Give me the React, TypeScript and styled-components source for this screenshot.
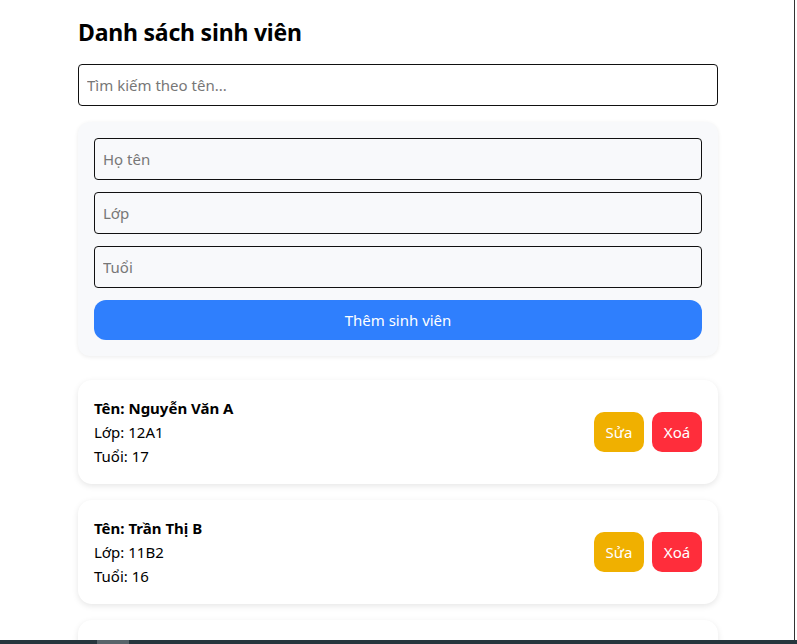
import React, { useState } from "react";
import styled, { createGlobalStyle } from "styled-components";

const GlobalStyle = createGlobalStyle`
  html, body { margin: 0; padding: 0; background: #fff; }
  body { font-family: "Noto Sans", "Open Sans", sans-serif; color: #000; }
  * { box-sizing: border-box; }
`;

const Page = styled.div`
  width: 795px;
  height: 644px;
  border-right: 1px solid #333;
  overflow: hidden;
  position: relative;
`;

const Container = styled.div`
  width: 640px;
  margin: 0 0 0 78px;
  padding-top: 16px;
  display: flex;
  flex-direction: column;
`;

const Title = styled.h1`
  margin: 0 0 16px;
  font-size: 23px;
  font-weight: 700;
  line-height: 32px;
  letter-spacing: -0.2px;
`;

const Input = styled.input`
  display: block;
  width: 100%;
  height: 42px;
  padding: 0 8px;
  font-family: inherit;
  font-size: 15px;
  border: 1px solid #111;
  border-radius: 4px;
  background: ${(p: { $tint?: boolean }) => (p.$tint ? "#f8f9fb" : "#fff")};
  color: #000;
  outline: none;
  &::placeholder { color: #777; }
`;

const FormCard = styled.div`
  margin-top: 16px;
  background: #f8f9fb;
  border-radius: 12px;
  padding: 16px;
  display: flex;
  flex-direction: column;
  gap: 12px;
  box-shadow: 0 1px 4px rgba(0, 0, 0, 0.08);
`;

const PrimaryButton = styled.button`
  height: 40px;
  border: none;
  border-radius: 12px;
  background: #2f7ffd;
  color: #fff;
  font-family: inherit;
  font-size: 15px;
  cursor: pointer;
`;

const List = styled.div`
  margin-top: 24px;
  display: flex;
  flex-direction: column;
  gap: 16px;
`;

const StudentCard = styled.div`
  background: #fff;
  border-radius: 14px;
  padding: 16px;
  display: flex;
  align-items: center;
  justify-content: space-between;
  box-shadow: 0 2px 6px rgba(0, 0, 0, 0.1);
  min-height: 104px;
`;

const Info = styled.div`
  display: flex;
  flex-direction: column;
  font-size: 15px;
  line-height: 24px;
`;

const Name = styled.div`
  font-weight: 700;
`;

const Actions = styled.div`
  display: flex;
  gap: 8px;
`;

const ActionButton = styled.button<{ $variant: "edit" | "delete" }>`
  width: 50px;
  height: 40px;
  border: none;
  border-radius: 10px;
  background: ${(p) => (p.$variant === "edit" ? "#f0b000" : "#ff2d3b")};
  color: #fff;
  font-family: inherit;
  font-size: 15px;
  cursor: pointer;
`;

const BottomBar = styled.div`
  position: fixed;
  left: 0;
  right: 0;
  bottom: 0;
  height: 4px;
  background: #26363d;
`;

const BarThumb = styled.div`
  position: absolute;
  left: 97px;
  width: 32px;
  top: 0;
  bottom: 0;
  background: #58646a;
`;

type Student = { name: string; cls: string; age: number };

const students: Student[] = [
  { name: "Nguyễn Văn A", cls: "12A1", age: 17 },
  { name: "Trần Thị B", cls: "11B2", age: 16 },
  { name: "Lê Văn C", cls: "10C3", age: 15 },
];

export default function App() {
  const [q, setQ] = useState("");
  return (
    <>
      <GlobalStyle />
      <Page>
        <Container>
          <Title>Danh sách sinh viên</Title>
          <Input placeholder="Tìm kiếm theo tên..." value={q} onChange={(e) => setQ(e.target.value)} />
          <FormCard>
            <Input $tint placeholder="Họ tên" />
            <Input $tint placeholder="Lớp" />
            <Input $tint placeholder="Tuổi" />
            <PrimaryButton>Thêm sinh viên</PrimaryButton>
          </FormCard>
          <List>
            {students.map((s) => (
              <StudentCard key={s.name}>
                <Info>
                  <Name>Tên: {s.name}</Name>
                  <div>Lớp: {s.cls}</div>
                  <div>Tuổi: {s.age}</div>
                </Info>
                <Actions>
                  <ActionButton $variant="edit">Sửa</ActionButton>
                  <ActionButton $variant="delete">Xoá</ActionButton>
                </Actions>
              </StudentCard>
            ))}
          </List>
        </Container>
      </Page>
      <BottomBar>
        <BarThumb />
      </BottomBar>
    </>
  );
}
